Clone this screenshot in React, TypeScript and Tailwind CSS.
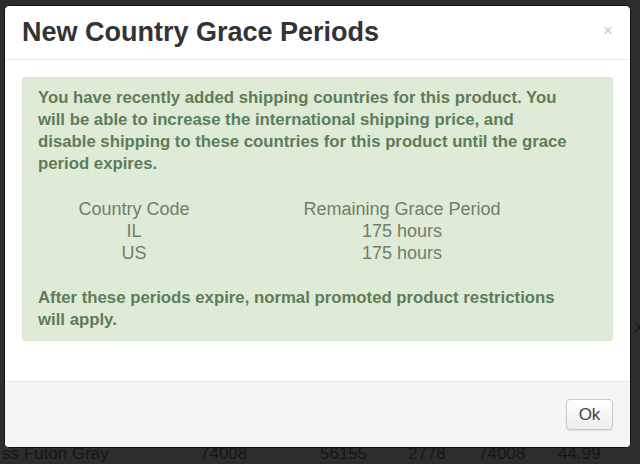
import React from "react";

export default function App() {
  const font = { fontFamily: '"Liberation Sans", Arial, sans-serif' };
  return (
    <div
      className="relative w-[640px] h-[464px] overflow-hidden bg-[#2d2d2d]"
      style={font}
    >
      {/* background page content peeking out */}
      <div className="absolute left-0 top-[441px] flex items-center text-[17px] text-[#161616] whitespace-nowrap">
        <span className="w-[200px] pl-[2px]">ss Futon Gray</span>
        <span className="w-[120px]">74008</span>
        <span className="w-[88px]">56155</span>
        <span className="w-[70px]">2778</span>
        <span className="w-[80px]">74008</span>
        <span className="w-[60px]">44.99</span>
      </div>
      <div className="absolute right-[-3px] top-[315px] text-[16px] text-[#161616]">x</div>

      {/* modal */}
      <div className="absolute left-[4px] top-[5px] w-[627px] h-[443px] flex flex-col rounded-[5px] border border-[#111] bg-white overflow-hidden">
        <div className="h-[54px] flex items-center justify-between pl-[17px] pr-[17px] border-b border-[#e8e8e8] shrink-0">
          <h1 className="text-[27px] font-bold text-[#333] leading-none">
            New Country Grace Periods
          </h1>
          <span className="text-[17px] text-[#c8c8c8] leading-none pb-[4px]">×</span>
        </div>
        <div className="flex-1 px-[17px] pt-[17px]">
          <div className="rounded-[3px] bg-[#dfebd6] border border-[#d8e7cd] px-[15px] py-[9px] text-[16.75px] leading-[22px] text-[#5d7d5a]">
            <p className="font-bold">
              You have recently added shipping countries for this product. You
              <br />
              will be able to increase the international shipping price, and
              <br />
              disable shipping to these countries for this product until the grace
              <br />
              period expires.
            </p>
            <table className="mt-[23px] mb-[23px] text-[#6f7f6c] font-normal text-[18px]">
              <tbody>
                <tr className="h-[22px]">
                  <td className="w-[192px] text-center">Country Code</td>
                  <td className="w-[344px] text-center">Remaining Grace Period</td>
                </tr>
                <tr className="h-[22px]">
                  <td className="text-center">IL</td>
                  <td className="text-center">175 hours</td>
                </tr>
                <tr className="h-[22px]">
                  <td className="text-center">US</td>
                  <td className="text-center">175 hours</td>
                </tr>
              </tbody>
            </table>
            <p className="font-bold">
              After these periods expire, normal promoted product restrictions
              <br />
              will apply.
            </p>
          </div>
        </div>
        <div className="h-[66px] shrink-0 border-t border-[#e5e5e5] bg-[#f5f5f5] flex items-center justify-end pr-[17px]">
          <button className="w-[47px] h-[31px] rounded-[4px] border border-[#c9c9c9] bg-gradient-to-b from-white to-[#eeeeee] text-[17px] text-[#444] shadow-[0_1px_1px_rgba(0,0,0,0.08)]">
            Ok
          </button>
        </div>
      </div>
    </div>
  );
}
